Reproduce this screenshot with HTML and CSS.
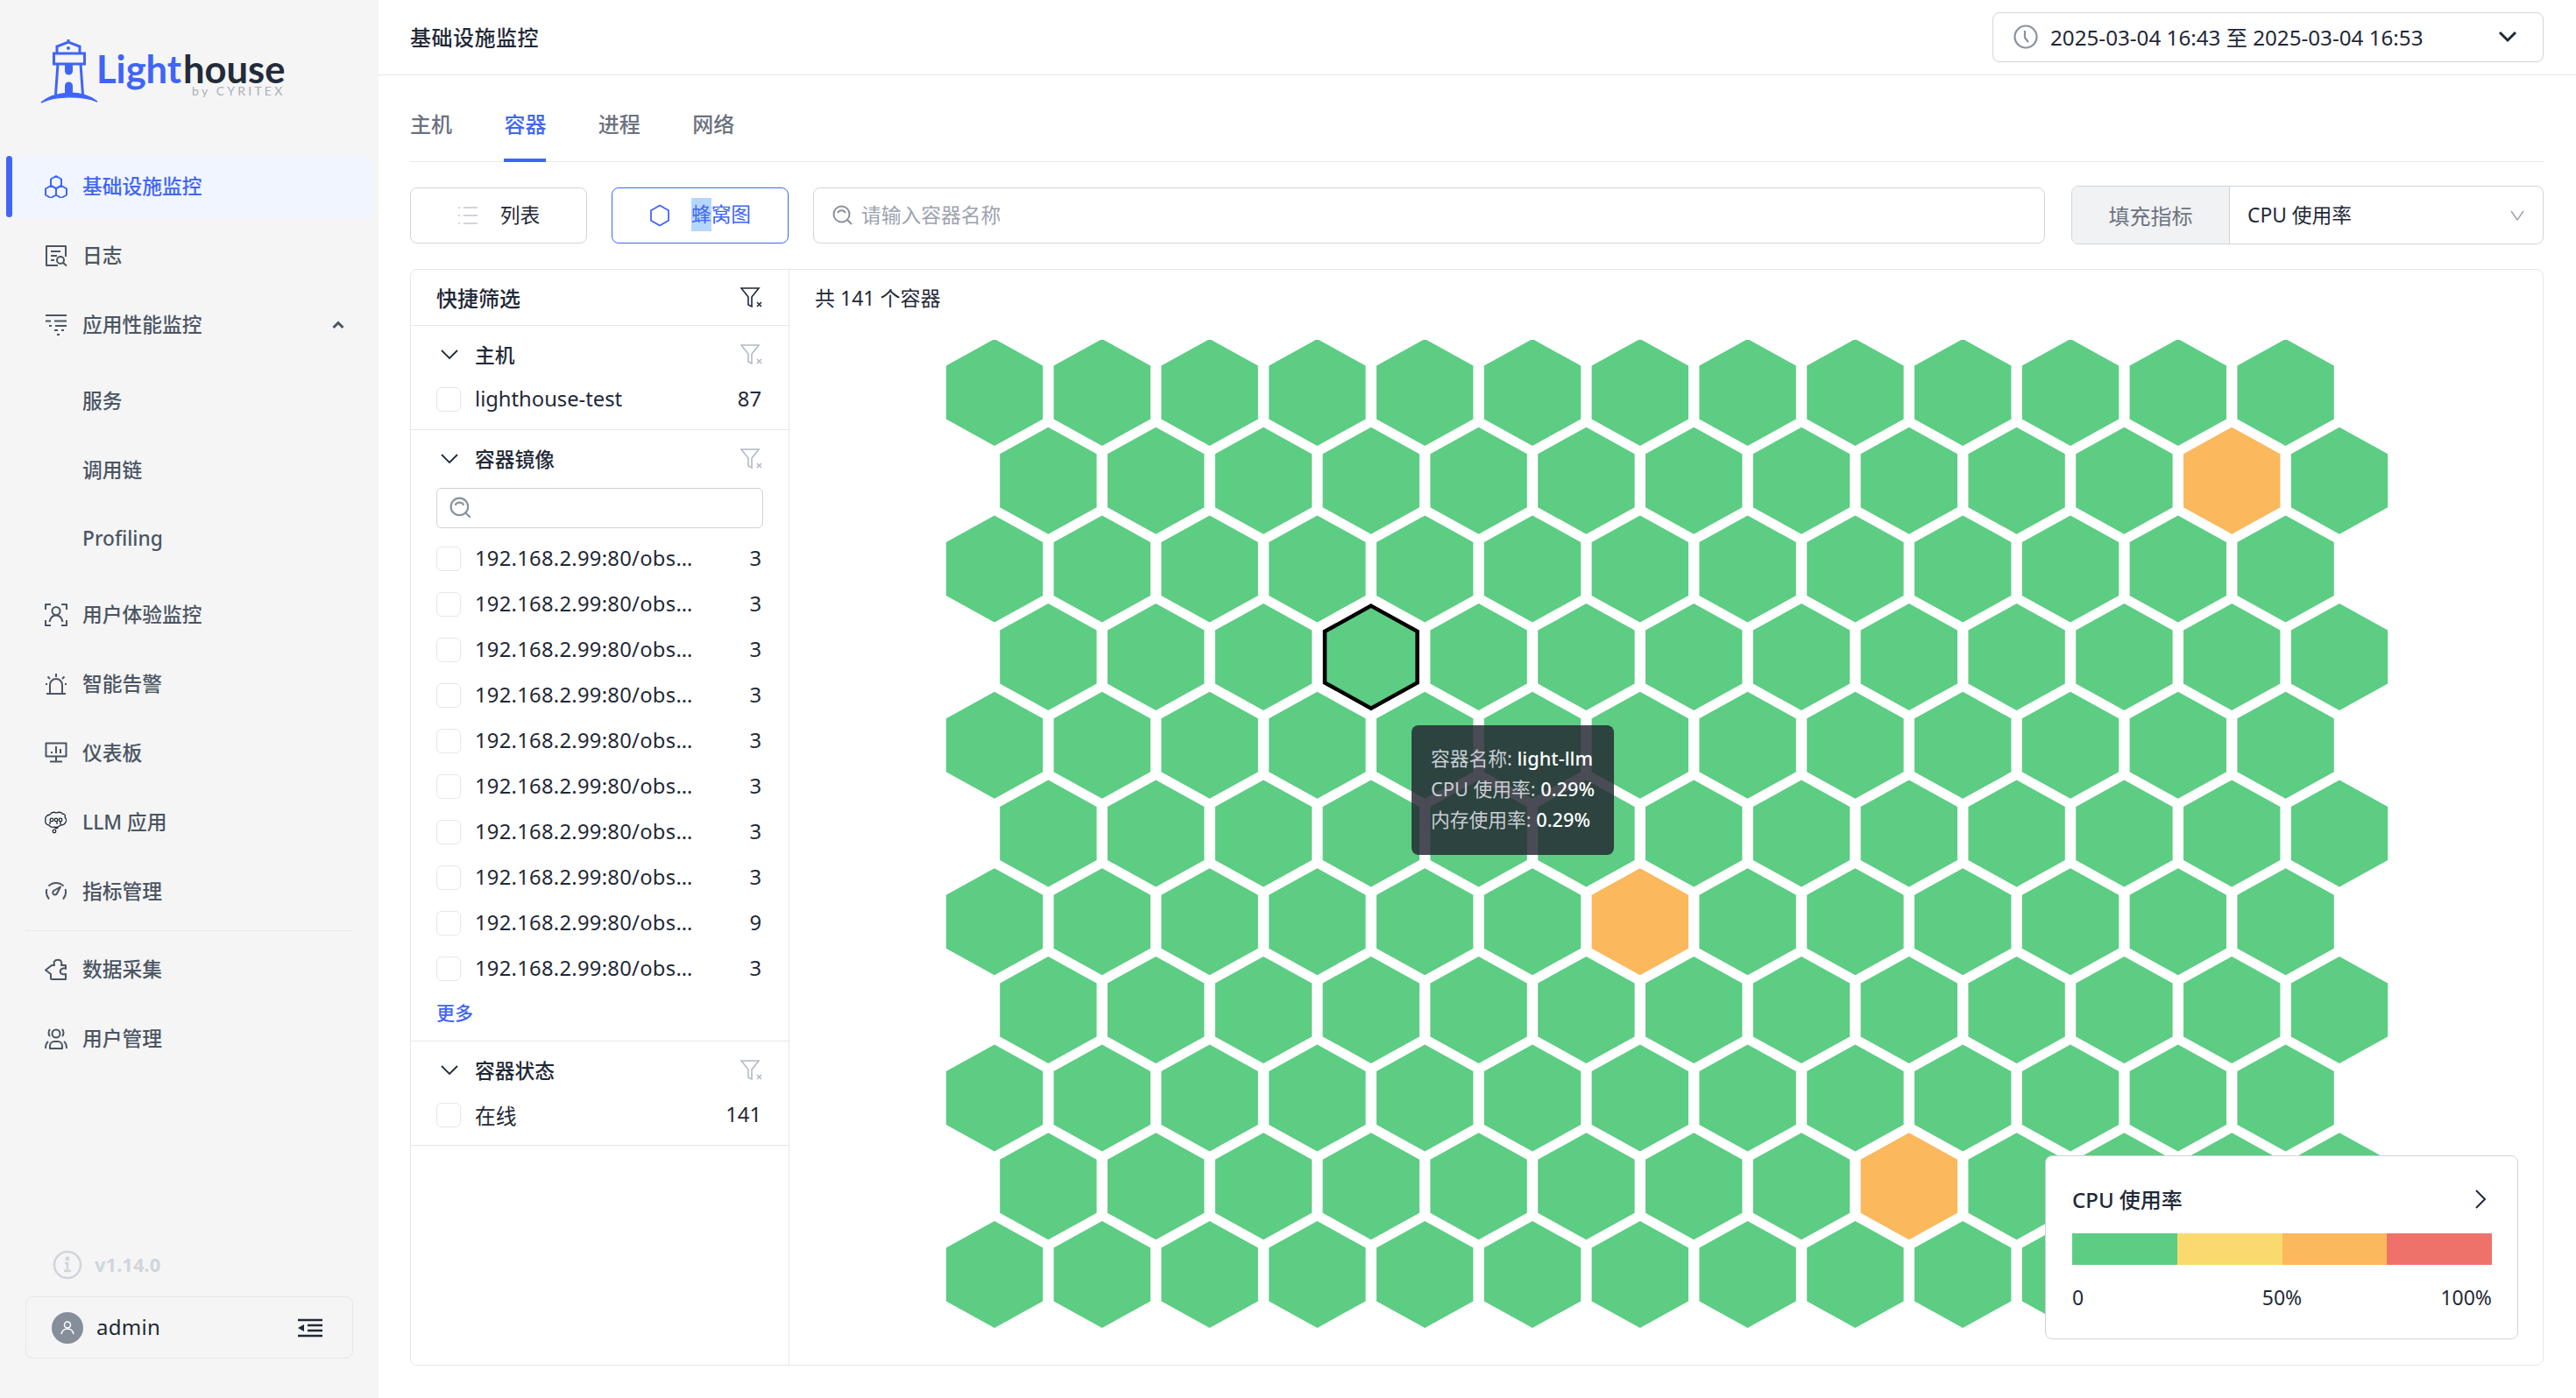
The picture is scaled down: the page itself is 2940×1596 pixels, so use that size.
FILE: index.html
```html
<!DOCTYPE html>
<html lang="zh-CN">
<head>
    <meta charset="UTF-8">
    <title>基础设施监控</title>
    <link rel="stylesheet" href="styles.css">
</head>
<body>
<div class="app">
    <aside class="sidebar">
        <div class="logo">
            <svg class="logo-mark" viewBox="0 0 66 74" fill="none" stroke="#4065f6" stroke-width="3">
                <path d="M32 0v4M19 16V8l13-5 13 5v8"/>
                <rect x="15.500" y="16" width="35" height="12"/>
                <path d="M20 28l-2.500 35M46 28l2.500 35"/>
                <circle cx="32" cy="10" r="2" fill="#4065f6" stroke="none"/>
                <path d="M28 28h9v8a4.500 4.500 0 0 1-9 0z" fill="#4065f6" stroke="none"/>
                <path d="M28 63V53a4.500 4.500 0 0 1 9 0v10z" fill="#4065f6" stroke="none"/>
                <path d="M1 72C18 58 48 58 65 71C48 64 18 64 1 72z" fill="#4065f6" stroke="#4065f6" stroke-width="1.500"/>
            </svg>
            <div class="logo-text">
                <div class="logo-name"><span class="logo-light">Light</span><span class="logo-house">house</span></div>
                <div class="logo-by">by CYRITEX</div>
            </div>
        </div>

        <nav class="nav">
            <a class="nav-item active">
                <svg class="nav-icon" viewBox="0 0 26 26"><path d="M13 1l6 3.500v7l-6 3.500-6-3.500v-7zM7 12l6 3.500v7l-6 3.500-6-3.500v-7zM19 12l6 3.500v7l-6 3.500-6-3.500v-7z"/></svg>
                <span>基础设施监控</span>
            </a>
            <a class="nav-item">
                <svg class="nav-icon" viewBox="0 0 26 26"><path d="M24 14V2H2v22h13M7 8h11M7 13h7M7 18h4"/><circle cx="18" cy="18" r="4"/><path d="M21 21l4 3.500"/></svg>
                <span>日志</span>
            </a>
            <a class="nav-item">
                <svg class="nav-icon" viewBox="0 0 26 26"><path d="M1 2h24M1 8.500h6M11 8.500h14M5 14h3M12 14h13M11 19h4M19 19h3M14 24h3"/></svg>
                <span>应用性能监控</span>
                <svg class="nav-caret" viewBox="0 0 14 10"><path d="M1.500 8L7 2.500 12.500 8"/></svg>
            </a>
            <div class="sub-nav">
                <a class="sub-item"><span>服务</span></a>
                <a class="sub-item"><span>调用链</span></a>
                <a class="sub-item"><span>Profiling</span></a>
            </div>
            <a class="nav-item">
                <svg class="nav-icon" viewBox="0 0 26 26"><path d="M1 7V1h6M19 1h6v6M1 19v6h6M25 19v6h-6"/><circle cx="13" cy="8.500" r="4.500"/><path d="M5.500 21c1-5 4-7.500 7.500-7.500s6.500 2.500 7.500 7.500"/></svg>
                <span>用户体验监控</span>
            </a>
            <a class="nav-item">
                <svg class="nav-icon" viewBox="0 0 26 26"><path d="M2 24h22M6 23v-9a7 7 0 0 1 14 0v9M13 1v4M3.500 4.500l2.500 2.500M22.500 4.500L20 7M1 13h2M23 13h2"/></svg>
                <span>智能告警</span>
            </a>
            <a class="nav-item">
                <svg class="nav-icon" viewBox="0 0 26 26"><rect x="1.500" y="1.500" width="23" height="15"/><path d="M6 22.500h14M13 17v5M8 13v-2M13 13V5M18 13V8"/></svg>
                <span>仪表板</span>
            </a>
            <a class="nav-item">
                <svg class="nav-icon thin" viewBox="0 0 26 26"><path d="M6 4c2-3 5-3 7-2 3-1 6-1 7 1 3 0 4 2 3 4 2 2 2 5 0 7-1 2-3 2-5 2-2 2-5 3-7 2-2 1-5 0-6-2-3 0-5-3-4-6-1-3 2-6 5-6z"/><circle cx="8" cy="10" r="1.800"/><circle cx="13" cy="10" r="1.800"/><circle cx="18" cy="10" r="1.800"/><path d="M6 12v3M14 12v3M18 12v3"/><circle cx="11" cy="23" r="1.800"/><path d="M11 19c2 1 3 1 4 0"/></svg>
                <span>LLM 应用</span>
            </a>
            <a class="nav-item">
                <svg class="nav-icon" viewBox="0 0 26 26"><path d="M4.500 6.500A12 12 0 0 1 21.500 6.500M2.500 10A12 12 0 0 0 5 21.500M23.500 10A12 12 0 0 1 21 21.500"/><path d="M18 7.500l-4 7.500a2.500 2.500 0 1 1-3.800-3z"/></svg>
                <span>指标管理</span>
            </a>
            <div class="nav-divider"></div>
            <a class="nav-item">
                <svg class="nav-icon" viewBox="0 0 26 26"><path d="M8 8h3c0-1-1-2 0-4 1-3 7-3 8 0 .8 2 0 3 0 4h5v4c-1-1-2-1-4 0-3 1-3 5 0 6 2 .5 3 .5 4 0v6H8c-1 0-1-1-1-1v-5l-6-4.500z"/></svg>
                <span>数据采集</span>
            </a>
            <a class="nav-item">
                <svg class="nav-icon" viewBox="0 0 26 26"><circle cx="13" cy="7" r="4.500"/><path d="M6 24v-3a5 5 0 0 1 5-5h4a5 5 0 0 1 5 5v3zM6 2c-2 2-2 6 0 8M20 2c2 2 2 6 0 8M1 24c0-3 .5-6 3-8M25 24c0-3-.5-6-3-8"/></svg>
                <span>用户管理</span>
            </a>
        </nav>

        <div class="version">
            <svg class="version-icon" viewBox="0 0 34 34"><circle cx="17" cy="17" r="15"/><path d="M14 15h3v9M13 24h8"/><circle cx="17" cy="10" r="1.200" fill="#d1d5db"/></svg>
            <span>v1.14.0</span>
        </div>
        <div class="user-box">
            <span class="avatar">
                <svg viewBox="0 0 20 20"><circle cx="10" cy="6.500" r="3.500"/><path d="M3 17c.8-4 3.500-6 7-6s6.200 2 7 6"/></svg>
            </span>
            <span class="user-name">admin</span>
            <svg class="collapse-icon" viewBox="0 0 28 22"><path d="M0 2h28M11 8h17M11 14h17M0 20h28"/><path d="M7 7v8l-7-4z" class="solid"/></svg>
        </div>
    </aside>

    <main class="main">
        <header class="topbar">
            <div class="page-title">基础设施监控</div>
            <div class="time-range">
                <svg class="clock" viewBox="0 0 28 28"><circle cx="14" cy="14" r="12.500"/><path d="M13 7v8l4 5"/></svg>
                <span class="time-text">2025-03-04 16:43 至 2025-03-04 16:53</span>
                <svg class="time-caret" viewBox="0 0 22 14"><path d="M2 2l9 9 9-9"/></svg>
            </div>
        </header>

        <div class="content">
            <div class="tabs">
                <a class="tab">主机</a>
                <a class="tab active">容器</a>
                <a class="tab">进程</a>
                <a class="tab">网络</a>
            </div>

            <div class="toolbar">
                <button class="view-btn">
                    <svg class="btn-icon muted" viewBox="0 0 24 24"><path d="M1 3h2M7 3h16M1 12h2M7 12h16M1 21h2M7 21h16"/></svg>
                    <span>列表</span>
                </button>
                <button class="view-btn selected">
                    <svg class="btn-icon" viewBox="0 0 24 26"><path d="M12 1.500l10 5.700v11.600l-10 5.700-10-5.700V7.200z"/></svg>
                    <span><span class="text-selection">蜂</span>窝图</span>
                </button>
                <div class="search-box">
                    <svg class="search-icon" viewBox="0 0 24 24"><circle cx="10.500" cy="10.500" r="9"/><path d="M6 9a5 5 0 0 1 9 0M17 17l5 5"/></svg>
                    <span class="placeholder">请输入容器名称</span>
                </div>
                <div class="metric-select">
                    <div class="metric-label"><span>填充指标</span></div>
                    <div class="metric-value">
                        <span>CPU 使用率</span>
                        <svg class="metric-caret" viewBox="0 0 16 12"><path d="M1 1l7 10 7-10"/></svg>
                    </div>
                </div>
            </div>

            <div class="panel">
                <div class="filters">
                    <div class="filters-head">
                        <span>快捷筛选</span>
                        <svg class="clear-icon dark" viewBox="0 0 26 24"><path d="M1 1h20l-8 10v11l-4-2v-9z"/><path d="M19 17l5 5M24 17l-5 5"/></svg>
                    </div>

                    <section class="filter-group">
                        <div class="group-title">
                            <svg class="group-caret" viewBox="0 0 20 12"><path d="M1 1l9 9 9-9"/></svg>
                            <span>主机</span>
                            <svg class="clear-icon" viewBox="0 0 26 24"><path d="M1 1h20l-8 10v11l-4-2v-9z"/><path d="M19 17l5 5M24 17l-5 5"/></svg>
                        </div>
                        <label class="filter-row"><i class="checkbox"></i><span class="row-name">lighthouse-test</span><span class="row-count">87</span></label>
                    </section>

                    <section class="filter-group">
                        <div class="group-title">
                            <svg class="group-caret" viewBox="0 0 20 12"><path d="M1 1l9 9 9-9"/></svg>
                            <span>容器镜像</span>
                            <svg class="clear-icon" viewBox="0 0 26 24"><path d="M1 1h20l-8 10v11l-4-2v-9z"/><path d="M19 17l5 5M24 17l-5 5"/></svg>
                        </div>
                        <div class="filter-search">
                            <svg class="search-icon" viewBox="0 0 24 24"><circle cx="10.500" cy="10.500" r="9"/><path d="M6 9a5 5 0 0 1 9 0M17 17l5 5"/></svg>
                        </div>
                        <label class="filter-row"><i class="checkbox"></i><span class="row-name image">192.168.2.99:80/obs…</span><span class="row-count">3</span></label>
                        <label class="filter-row"><i class="checkbox"></i><span class="row-name image">192.168.2.99:80/obs…</span><span class="row-count">3</span></label>
                        <label class="filter-row"><i class="checkbox"></i><span class="row-name image">192.168.2.99:80/obs…</span><span class="row-count">3</span></label>
                        <label class="filter-row"><i class="checkbox"></i><span class="row-name image">192.168.2.99:80/obs…</span><span class="row-count">3</span></label>
                        <label class="filter-row"><i class="checkbox"></i><span class="row-name image">192.168.2.99:80/obs…</span><span class="row-count">3</span></label>
                        <label class="filter-row"><i class="checkbox"></i><span class="row-name image">192.168.2.99:80/obs…</span><span class="row-count">3</span></label>
                        <label class="filter-row"><i class="checkbox"></i><span class="row-name image">192.168.2.99:80/obs…</span><span class="row-count">3</span></label>
                        <label class="filter-row"><i class="checkbox"></i><span class="row-name image">192.168.2.99:80/obs…</span><span class="row-count">3</span></label>
                        <label class="filter-row"><i class="checkbox"></i><span class="row-name image">192.168.2.99:80/obs…</span><span class="row-count">9</span></label>
                        <label class="filter-row"><i class="checkbox"></i><span class="row-name image">192.168.2.99:80/obs…</span><span class="row-count">3</span></label>
                        <a class="more-link"><span>更多</span></a>
                    </section>

                    <section class="filter-group">
                        <div class="group-title">
                            <svg class="group-caret" viewBox="0 0 20 12"><path d="M1 1l9 9 9-9"/></svg>
                            <span>容器状态</span>
                            <svg class="clear-icon" viewBox="0 0 26 24"><path d="M1 1h20l-8 10v11l-4-2v-9z"/><path d="M19 17l5 5M24 17l-5 5"/></svg>
                        </div>
                        <label class="filter-row"><i class="checkbox"></i><span class="row-name">在线</span><span class="row-count">141</span></label>
                    </section>
                </div>

                <div class="chart">
                    <div class="chart-count">共 141 个容器</div>
                    <svg id="hexGrid" class="hex-grid" viewBox="0 0 1660 1150"></svg>

                    <div class="hex-tooltip">
                        <div><span class="tip-key">容器名称:</span> <span class="tip-val">light-llm</span></div>
                        <div><span class="tip-key">CPU 使用率:</span> <span class="tip-val">0.29%</span></div>
                        <div><span class="tip-key">内存使用率:</span> <span class="tip-val">0.29%</span></div>
                    </div>

                    <div class="legend">
                        <div class="legend-head">
                            <span>CPU 使用率</span>
                            <svg class="legend-arrow" viewBox="0 0 14 24"><path d="M2 2l10 10L2 22"/></svg>
                        </div>
                        <div class="legend-bar">
                            <i class="seg-green"></i><i class="seg-yellow"></i><i class="seg-orange"></i><i class="seg-red"></i>
                        </div>
                        <div class="legend-scale"><span>0</span><span class="scale-mid">50%</span><span class="scale-end">100%</span></div>
                    </div>
                </div>
            </div>
        </div>
    </main>
</div>
<script src="script.js"></script>
</body>
</html>
```

FILE: styles.css
```css
* {
    box-sizing: border-box;
}

html, body {
    margin: 0;
    height: 100%;
    overflow: hidden;
    background: #fff;
}

body {
    font-family: "Noto Sans", "Noto Sans CJK SC", sans-serif;
    color: #1f2937;
}

.app {
    display: flex;
    height: 1596px;
}

/* Sidebar */
.sidebar {
    width: 432px;
    flex: none;
    display: flex;
    flex-direction: column;
    background: #f5f5f5;
    padding-bottom: 45px;
}

.logo {
    display: flex;
    height: 178px;
    padding: 45px 0 0 46px;
}

.logo-mark {
    width: 66px;
    height: 74px;
    flex: none;
}

.logo-text {
    margin-left: -2px;
    padding-top: 14px;
}

.logo-name {
    font-family: Lato, sans-serif;
    font-weight: 700;
    font-size: 43.500px;
    line-height: 38px;
    white-space: nowrap;
}

.logo-light {
    color: #4065f6;
}

.logo-house {
    color: #232b3a;
    margin-left: 2px;
}

.logo-by {
    font-family: Lato, sans-serif;
    font-size: 14px;
    line-height: 14px;
    letter-spacing: 3.200px;
    color: #a9afb9;
    text-align: right;
}

.nav {
    flex: 1;
    display: flex;
    flex-direction: column;
    gap: 9px;
}

.nav-item {
    display: flex;
    align-items: center;
    height: 70px;
    margin-left: 7px;
    width: 418px;
    padding: 0 30px 0 44px;
    font-size: 22.750px;
    font-weight: 500;
    color: #4b5563;
    border-radius: 8px;
    position: relative;
}

.nav-item span {
    margin-bottom: 3px;
}

.nav-item.active {
    background: #f0f5ff;
    color: #4065f6;
}

.nav-item.active::before {
    content: "";
    position: absolute;
    left: 0;
    top: 0;
    width: 7px;
    height: 100%;
    border-radius: 4px;
    background: #4065f6;
}

.nav-icon {
    width: 26px;
    height: 26px;
    flex: none;
    margin-right: 17px;
    fill: none;
    stroke: currentColor;
    stroke-width: 2;
    stroke-linejoin: round;
}

.nav-icon.thin {
    stroke: #1f2937;
    stroke-width: 1.300;
}

.nav-caret {
    width: 14px;
    height: 10px;
    margin-left: auto;
    margin-right: 2px;
    fill: none;
    stroke: currentColor;
    stroke-width: 3;
}

.sub-nav {
    display: flex;
    flex-direction: column;
    gap: 9px;
    margin-top: 7px;
    margin-bottom: 8px;
}

.sub-item {
    display: flex;
    align-items: center;
    height: 70px;
    padding-left: 94px;
    font-size: 22.750px;
    font-weight: 500;
    color: #4b5563;
}

.sub-item span {
    margin-bottom: 1px;
}

.nav-divider {
    height: 1px;
    margin: 0 29px;
    background: #e5e7eb;
}

.version {
    display: flex;
    align-items: center;
    height: 34px;
    margin: 0 0 19px 60px;
    font-size: 22px;
    font-weight: 700;
    color: #d1d5db;
}

.version span {
    margin-bottom: 2px;
}

.version-icon {
    width: 34px;
    height: 34px;
    margin-right: 14px;
    fill: none;
    stroke: #d1d5db;
    stroke-width: 2.500;
}

.user-box {
    display: flex;
    align-items: center;
    height: 71px;
    margin: 0 29px;
    padding: 0 34px 0 29px;
    border: 1px solid #e5e7eb;
    border-radius: 8px;
}

.avatar {
    display: flex;
    align-items: center;
    justify-content: center;
    width: 36px;
    height: 36px;
    border-radius: 50%;
    background: #868e9b;
}

.avatar svg {
    width: 20px;
    height: 20px;
    fill: none;
    stroke: #fff;
    stroke-width: 1.500;
}

.user-name {
    margin-left: 15px;
    margin-bottom: 3px;
    font-size: 24px;
    letter-spacing: .3px;
    color: #1f2937;
}

.collapse-icon {
    width: 28px;
    height: 22px;
    margin-left: auto;
    fill: none;
    stroke: #1f2937;
    stroke-width: 2.500;
}

.collapse-icon .solid {
    fill: #1f2937;
    stroke: none;
}

/* Main */
.main {
    flex: 1;
    min-width: 0;
    display: flex;
    flex-direction: column;
}

.topbar {
    display: flex;
    align-items: center;
    justify-content: space-between;
    height: 86px;
    padding: 0 37px 0 36px;
    border-bottom: 1px solid #e5e7eb;
}

.page-title {
    margin-bottom: 3px;
    font-size: 24px;
    font-weight: 500;
    letter-spacing: .5px;
    color: #1f2937;
}

.time-range {
    display: flex;
    align-items: center;
    width: 629px;
    height: 57px;
    margin-top: -1px;
    padding: 0 29px 0 23px;
    border: 1px solid #d1d5db;
    border-radius: 8px;
}

.clock {
    width: 28px;
    height: 28px;
    fill: none;
    stroke: #8a929e;
    stroke-width: 2.200;
}

.time-text {
    margin-left: 14px;
    margin-bottom: 2px;
    font-size: 24.200px;
    white-space: nowrap;
}

.time-caret {
    width: 22px;
    height: 14px;
    margin-left: auto;
    fill: none;
    stroke: #1f2937;
    stroke-width: 3;
}

.content {
    flex: 1;
    min-height: 0;
    display: flex;
    flex-direction: column;
    padding: 0 37px 37px 36px;
}

.tabs {
    display: flex;
    gap: 59.400px;
    margin-top: 39px;
    border-bottom: 1px solid #e5e7eb;
}

.tab {
    margin-bottom: -1px;
    padding-bottom: 22px;
    border-bottom: 4px solid transparent;
    font-size: 24px;
    line-height: 34px;
    font-weight: 500;
    color: #6b7280;
}

.tab.active {
    color: #4065f6;
    border-bottom-color: #4065f6;
}

.toolbar {
    display: flex;
    align-items: center;
    margin-top: 27px;
    height: 67px;
}

.view-btn {
    display: flex;
    align-items: center;
    justify-content: center;
    width: 202px;
    height: 64px;
    margin-right: 28px;
    background: #fff;
    border: 1px solid #d1d5db;
    border-radius: 8px;
    font-family: inherit;
    font-size: 22.750px;
    color: #1f2937;
}

.view-btn > span {
    margin-bottom: 2px;
}

.view-btn.selected {
    color: #4065f6;
    border-color: #4065f6;
}

.btn-icon {
    width: 24px;
    height: 26px;
    margin-right: 24px;
    fill: none;
    stroke: currentColor;
    stroke-width: 1.800;
}

.btn-icon.muted {
    stroke: #d1d5db;
    margin-right: 25px;
}

.text-selection {
    display: inline-block;
    background: #b4d7ff;
    line-height: 38px;
}

.search-box {
    flex: 1;
    display: flex;
    align-items: center;
    height: 64px;
    margin-right: 30px;
    padding-left: 21px;
    border: 1px solid #d1d5db;
    border-radius: 8px;
}

.search-icon {
    width: 24px;
    height: 24px;
    flex: none;
    fill: none;
    stroke: #8a929e;
    stroke-width: 2;
}

.placeholder {
    margin-left: 9px;
    margin-bottom: 2px;
    font-size: 22.750px;
    color: #9ca3af;
}

.metric-select {
    display: flex;
    width: 539px;
    height: 67px;
    border: 1px solid #d1d5db;
    border-radius: 8px;
    overflow: hidden;
}

.metric-label {
    display: flex;
    align-items: center;
    justify-content: center;
    width: 180px;
    background: #f1f2f4;
    border-right: 1px solid #d1d5db;
    font-size: 24px;
    color: #6b7280;
}

.metric-value {
    flex: 1;
    display: flex;
    align-items: center;
    justify-content: space-between;
    padding: 0 21px 0 20px;
    font-size: 22.750px;
}

.metric-value span {
    margin-bottom: 2px;
}

.metric-caret {
    width: 16px;
    height: 12px;
    fill: none;
    stroke: #9ca3af;
    stroke-width: 1.500;
}

.panel {
    flex: 1;
    min-height: 0;
    display: flex;
    margin-top: 28px;
    border: 1px solid #e5e7eb;
    border-radius: 8px;
}

/* Filters */
.filters {
    width: 432px;
    flex: none;
    border-right: 1px solid #e5e7eb;
}

.filters-head {
    display: flex;
    align-items: center;
    justify-content: space-between;
    height: 64px;
    padding: 0 29px;
    border-bottom: 1px solid #e5e7eb;
    font-size: 24px;
    font-weight: 500;
}

.filter-group {
    padding: 8px 0;
    border-bottom: 1px solid #e5e7eb;
}

.group-title {
    display: flex;
    align-items: center;
    height: 50px;
    padding: 0 29px 0 34px;
    font-size: 22.750px;
    font-weight: 500;
}

.group-title span,
.filter-row span,
.more-link span {
    margin-bottom: 2px;
}

.group-caret {
    width: 20px;
    height: 12px;
    margin-right: 19px;
    fill: none;
    stroke: #1f2937;
    stroke-width: 1.800;
}

.clear-icon {
    width: 26px;
    height: 24px;
    margin-left: auto;
    fill: none;
    stroke: #b4bac4;
    stroke-width: 1.600;
}

.clear-icon.dark {
    stroke: #1f2937;
}

.filter-search {
    display: flex;
    align-items: center;
    height: 46px;
    margin: 8px 29px 9px;
    padding-left: 14px;
    border: 1px solid #cfd3da;
    border-radius: 6px;
}

.filter-search .search-icon {
    width: 26px;
    height: 26px;
}

.filter-row {
    display: flex;
    align-items: center;
    height: 52px;
    padding: 0 31px 0 29px;
    font-size: 23.750px;
}

.row-name.image {
    letter-spacing: .28px;
}

.checkbox {
    width: 28px;
    height: 28px;
    flex: none;
    margin-right: 16px;
    border: 1px solid #e5e7eb;
    border-radius: 6px;
}

.row-count {
    margin-left: auto;
}

.more-link {
    display: flex;
    align-items: center;
    height: 48px;
    padding-left: 29px;
    font-size: 21px;
    font-weight: 500;
    color: #4065f6;
}

/* Hex chart */
.chart {
    flex: 1;
    min-width: 0;
    position: relative;
}

.chart-count {
    height: 80px;
    padding: 15px 0 0 29px;
    font-size: 23px;
    line-height: 34px;
}

.hex-grid {
    display: block;
    width: 1660px;
    height: 1150px;
    margin-left: 169px;
}

.hex {
    fill: #5ccd83;
}

.hex.warn {
    fill: #fbb85c;
}

.hex.focus {
    stroke: #000;
    stroke-width: 4.500;
}

.hex-tooltip {
    position: absolute;
    left: 710px;
    top: 520px;
    width: 231px;
    height: 148px;
    padding: 20px 22px;
    border-radius: 8px;
    background: rgba(34, 37, 47, .82);
    font-size: 21.750px;
    line-height: 35px;
    white-space: nowrap;
}

.tip-key {
    color: #c9cdd4;
}

.tip-val {
    color: #fff;
    font-weight: 500;
}

.legend {
    position: absolute;
    left: 1433px;
    top: 1011px;
    width: 540px;
    height: 210px;
    padding: 29px 29px 0 30px;
    background: #fff;
    border: 1px solid #cfd3da;
    border-radius: 8px;
}

.legend-head {
    display: flex;
    align-items: center;
    justify-content: space-between;
    height: 40px;
    padding-right: 6px;
    font-size: 24px;
    font-weight: 500;
}

.legend-head span {
    margin-bottom: 2px;
}

.legend-arrow {
    width: 14px;
    height: 24px;
    fill: none;
    stroke: #1f2937;
    stroke-width: 2;
}

.legend-bar {
    display: flex;
    height: 36px;
    margin-top: 19px;
}

.legend-bar i {
    flex: 1;
}

.seg-green { background: #5ccd83; }
.seg-yellow { background: #fada6e; }
.seg-orange { background: #fbb85c; }
.seg-red { background: #ef726a; }

.legend-scale {
    display: grid;
    grid-template-columns: 1fr 1fr 1fr;
    margin-top: 20px;
    font-size: 23px;
    line-height: 34px;
}

.scale-mid {
    text-align: center;
}

.scale-end {
    text-align: right;
}
```

FILE: script.js
```js
// honeycomb, 11 rows of 13, every other row shifted half a column
var svg = document.getElementById('hexGrid');
var NS = 'http://www.w3.org/2000/svg';
var colStep = 122.8, rowStep = 100.7;
var originX = 65, originY = 60;
var warn = { '1-11': 1, '6-6': 1, '9-8': 1 };

function hexPoints(cx, cy, r, w) {
    return [
        [cx, cy - r], [cx + w, cy - r / 2], [cx + w, cy + r / 2],
        [cx, cy + r], [cx - w, cy + r / 2], [cx - w, cy - r / 2]
    ].map(function (p) { return p[0].toFixed(1) + ',' + p[1].toFixed(1); }).join(' ');
}

for (var row = 0; row < 11; row++) {
    for (var col = 0; col < 13; col++) {
        var cx = originX + col * colStep + (row % 2 ? colStep / 2 : 0);
        var cy = originY + row * rowStep;
        var focus = row === 3 && col === 3;
        var hex = document.createElementNS(NS, 'polygon');
        hex.setAttribute('points', focus ? hexPoints(cx, cy, 58.5, 52.8) : hexPoints(cx, cy, 61, 55.2));
        hex.setAttribute('class', 'hex' + (warn[row + '-' + col] ? ' warn' : '') + (focus ? ' focus' : ''));
        svg.appendChild(hex);
    }
}
```
